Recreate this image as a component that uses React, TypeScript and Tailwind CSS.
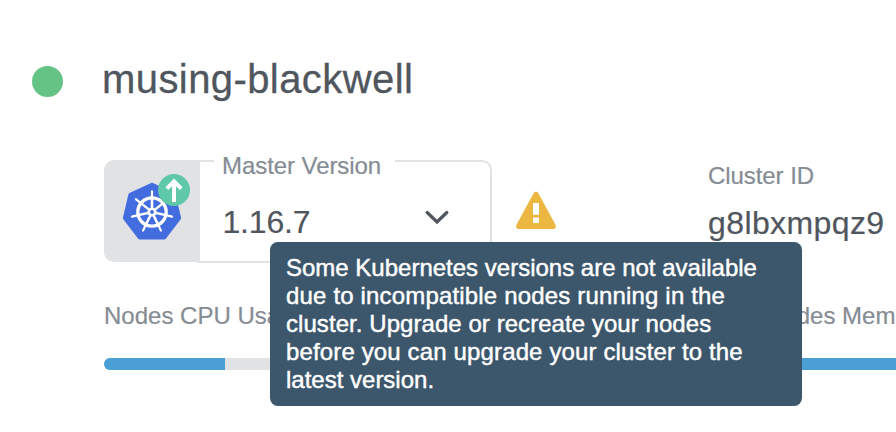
import React from 'react';

const SPOKES = [0, 1, 2, 3, 4, 5, 6].map((i) => (i * 360) / 7);

function KubernetesIcon() {
  return (
    <svg className="h-[102px] w-24" viewBox="0 0 96 102" fill="none">
      <path
        d="M48 24.8 L69.6 35 L75 58 L60.2 77.4 H35.8 L21 58 L26.4 35 Z"
        fill="#436ddf"
        stroke="#436ddf"
        strokeWidth="4.2"
        strokeLinejoin="round"
      />
      <g stroke="#fff">
        <circle cx="48" cy="52" r="14.2" strokeWidth="3.3" />
        {SPOKES.map((angle) => (
          <g key={angle} transform={`rotate(${angle} 48 52)`}>
            <path d="M48 49 V39" strokeWidth="2.5" />
            <path d="M48 38 V31.4" strokeWidth="2.2" strokeLinecap="round" />
          </g>
        ))}
      </g>
      <circle cx="48" cy="52" r="4.6" fill="#fff" />
      <circle cx="48" cy="52" r="1.9" fill="#436ddf" />
      <circle cx="70" cy="30" r="16" fill="#5fc8a8" />
      <path d="M70 42 V21 M62.8 28.6 L70 21.4 L77.2 28.6" stroke="#fff" strokeWidth="4" />
    </svg>
  );
}

function WarningIcon() {
  return (
    <svg className="mt-[31px] ml-6 h-[39px] w-10" viewBox="0 0 40 39">
      <path
        d="M17.8 2 Q20 -1 22.2 2 L39.4 33.6 Q41 38 37 38 H3 Q-1 38 0.6 33.6 Z"
        fill="#ecb740"
      />
      <path d="M17 12 H23 V23.7 H17 Z M17 26.5 H23 V32 H17 Z" fill="#fff" />
    </svg>
  );
}

function VersionSelect() {
  return (
    <div className="relative flex h-[103px] w-[388px]">
      <div className="h-[102px] w-24 shrink-0 rounded-l-[10px] bg-[#e0e2e4]">
        <KubernetesIcon />
      </div>
      <div className="-ml-0.5 flex flex-1 items-center justify-between rounded-r-[10px] border-2 border-[#e0e2e4] border-l-0 pr-[41px] pl-[24.5px]">
        <span className="mt-[20px] text-[32px] leading-9 tracking-[-0.2px] [-webkit-text-stroke:0.2px]">1.16.7</span>
        <svg className="mt-[11px] h-4 w-6" viewBox="0 0 24 16" fill="none">
          <path
            d="M2.2 3.5 L12 13 L21.8 3.5"
            stroke="#50565e"
            strokeWidth="3.2"
            strokeLinecap="round"
          />
        </svg>
      </div>
      <span className="absolute -top-2 left-[110px] w-[181px] bg-white pl-2 text-2xl leading-7 tracking-[-0.07px] whitespace-nowrap text-[#858c94] [-webkit-text-stroke:0.2px]">
        Master Version
      </span>
    </div>
  );
}

function Usage({ label, value, className }: { label: string; value: number; className: string }) {
  return (
    <div className={className}>
      <div className="text-2xl leading-7 whitespace-nowrap text-[#858c94] [-webkit-text-stroke:0.2px]">{label}</div>
      <div className="mt-7 h-3 overflow-hidden rounded-md bg-[#e0e2e4]">
        <div className="h-full bg-[#4a9fd7]" style={{ width: `${value}%` }} />
      </div>
    </div>
  );
}

export default function App() {
  return (
    <main className="relative h-[432px] w-[896px] overflow-hidden bg-white font-['Liberation_Sans',Arial,sans-serif] text-[#50565e]">
      <header className="flex h-40 items-start pt-14 pl-8">
        <span className="mt-[9.5px] size-[31px] rounded-full bg-[#65c485]" />
        <h1 className="ml-[39px] text-[40px] leading-[46px] tracking-[0.42px] [-webkit-text-stroke:0.3px]">
          musing-blackwell
        </h1>
      </header>
      <section className="flex h-[142px] items-start pl-[104px]">
        <VersionSelect />
        <WarningIcon />
        <div className="ml-[152px]">
          <div className="mt-0.5 text-2xl leading-7 tracking-[-0.07px] whitespace-nowrap text-[#858c94] [-webkit-text-stroke:0.2px]">
            Cluster ID
          </div>
          <div className="mt-[15px] text-[32px] leading-9 tracking-[0.4px] [-webkit-text-stroke:0.2px]">g8lbxmpqz9</div>
        </div>
      </section>
      <section className="flex gap-[58px] pl-[104px]">
        <Usage label="Nodes CPU Usage" value={20} className="w-[604px] shrink-0" />
        <Usage label="Nodes Memory Usage" value={70} className="w-[604px] shrink-0" />
      </section>
      <div
        role="tooltip"
        className="absolute top-[242px] left-[270px] h-[164px] w-[532px] rounded-lg bg-[#3c566c] px-4 py-3 text-2xl leading-7 whitespace-nowrap text-white [-webkit-text-stroke:0.45px]"
      >
        <p>Some Kubernetes versions are not available</p>
        <p className="tracking-[0.17px]">due to incompatible nodes running in the</p>
        <p className="tracking-[0.06px]">cluster. Upgrade or recreate your nodes</p>
        <p className="tracking-[0.14px]">before you can upgrade your cluster to the</p>
        <p>latest version.</p>
      </div>
    </main>
  );
}
